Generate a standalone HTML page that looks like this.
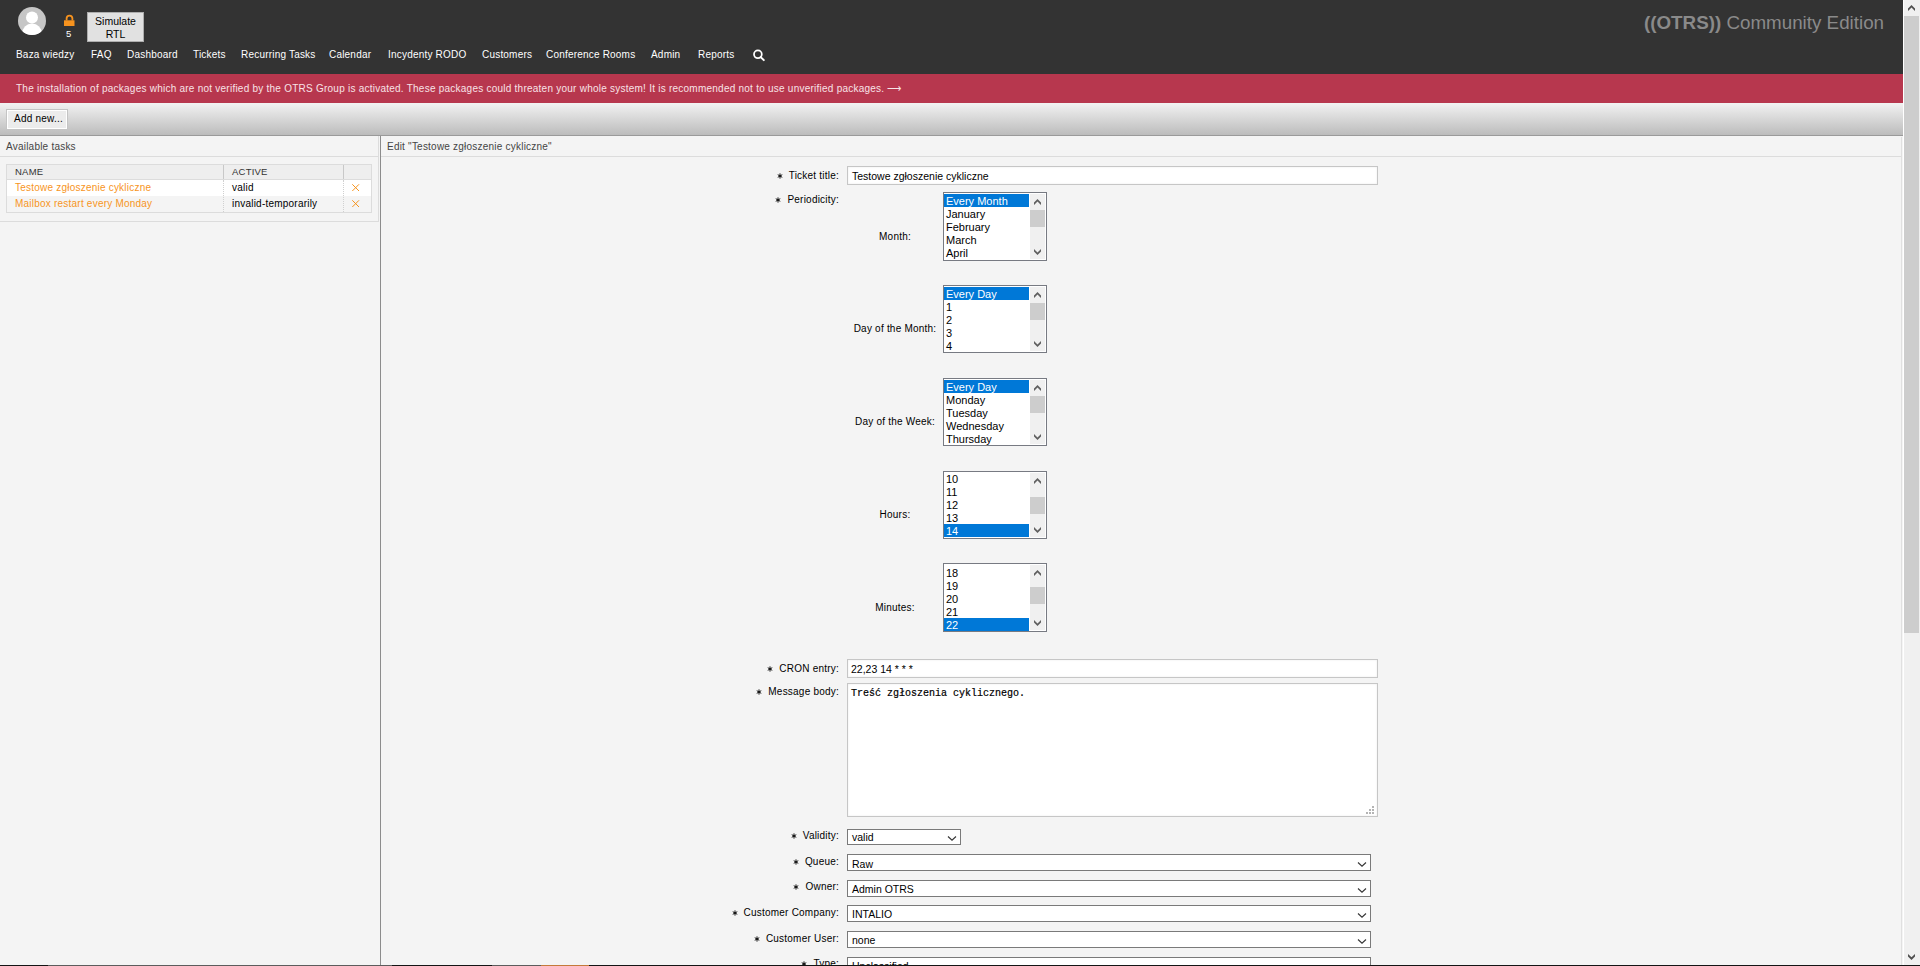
<!DOCTYPE html>
<html><head><meta charset="utf-8">
<style>
html,body{margin:0;padding:0;overflow:hidden;width:1920px;height:966px;background:#f4f4f4;}
body{font-family:"Liberation Sans",sans-serif;font-size:10px;letter-spacing:0.22px;color:#000;position:relative;}
.a{position:absolute;white-space:nowrap;line-height:normal;}
#hdr{position:absolute;left:0;top:0;width:1903px;height:74px;background:#333;}
.nav{position:absolute;top:49px;color:#fff;font-size:10px;letter-spacing:0.2px;white-space:nowrap;}
#banner{position:absolute;left:0;top:74px;width:1903px;height:29px;background:#b7374e;}
#tb{position:absolute;left:0;top:103px;width:1903px;height:32px;background:linear-gradient(#f2f2f2,#bcbcbc);border-bottom:1px solid #9a9a9a;}
.lbl{position:absolute;white-space:nowrap;text-align:right;color:#000;}
.st{display:inline-block;vertical-align:baseline;margin-right:6px;position:relative;top:0px;}
.inp{position:absolute;box-sizing:border-box;background:#fff;border:1px solid #c6c6c6;box-shadow:inset 0 0 2px rgba(0,0,0,0.09);}
.sel{position:absolute;box-sizing:border-box;background:#fff;border:1px solid #7a7a7a;}
.v{letter-spacing:0;font-size:10.5px;}
.lb{position:absolute;box-sizing:border-box;width:104px;height:69px;background:#fff;border:1px solid #777a82;overflow:hidden;}
.lb .it{position:absolute;left:0;width:85px;height:13px;font-size:11px;letter-spacing:0;}
.lb .it span{position:absolute;left:2px;top:1px;}
.lb .it.s{background:#0078d7;color:#fff;}
.lb .sb{position:absolute;left:86px;top:1px;width:15px;height:65px;background:#f0f0f0;}
.lb .th{position:absolute;left:0;width:15px;height:17px;background:#cdcdcd;}
</style></head><body>

<!-- HEADER -->
<div id="hdr">
  <svg style="position:absolute;left:18px;top:7px" width="28" height="28" viewBox="0 0 28 28">
    <defs><clipPath id="avc"><circle cx="14" cy="14" r="14"/></clipPath></defs>
    <circle cx="14" cy="14" r="14" fill="#c6c6c6"/>
    <g clip-path="url(#avc)" fill="#fff">
      <circle cx="14" cy="10.5" r="6"/>
      <ellipse cx="14" cy="27" rx="10" ry="10.5"/>
    </g>
  </svg>
  <svg style="position:absolute;left:64px;top:14px" width="11" height="13" viewBox="0 0 11 13">
    <path d="M2.6 6.5 V4.5 A2.9 2.9 0 0 1 8.4 4.5 V6.5" fill="none" stroke="#f7931e" stroke-width="1.8"/>
    <rect x="0" y="6.3" width="10.5" height="5.7" fill="#f7931e"/>
  </svg>
  <div class="a" style="left:66px;top:28px;color:#fff;font-size:9.5px;">5</div>
  <div style="position:absolute;left:87px;top:12px;width:57px;height:30px;box-sizing:border-box;background:#e1e1e1;border:1px solid #adadad;"></div>
  <div class="a" style="left:87px;width:57px;text-align:center;top:15px;font-size:10.5px;letter-spacing:0;color:#000;">Simulate</div>
  <div class="a" style="left:87px;width:57px;text-align:center;top:28px;font-size:10.5px;letter-spacing:0;color:#000;">RTL</div>

  <div class="nav" style="left:16px">Baza wiedzy</div>
  <div class="nav" style="left:91px">FAQ</div>
  <div class="nav" style="left:127px">Dashboard</div>
  <div class="nav" style="left:193px">Tickets</div>
  <div class="nav" style="left:241px">Recurring Tasks</div>
  <div class="nav" style="left:329px">Calendar</div>
  <div class="nav" style="left:388px">Incydenty RODO</div>
  <div class="nav" style="left:482px">Customers</div>
  <div class="nav" style="left:546px">Conference Rooms</div>
  <div class="nav" style="left:651px">Admin</div>
  <div class="nav" style="left:698px">Reports</div>
  <svg style="position:absolute;left:752px;top:48px" width="14" height="14" viewBox="0 0 14 14">
    <circle cx="5.9" cy="6.3" r="3.9" fill="none" stroke="#fff" stroke-width="1.75"/>
    <path d="M8.7 9.1 L11.8 12.1" stroke="#fff" stroke-width="2" stroke-linecap="round"/>
  </svg>

  <div class="a" style="left:1644px;top:12px;font-size:18.8px;letter-spacing:0;color:#8a8a8a;"><b>((OTRS))</b> Community Edition</div>
</div>

<!-- BANNER -->
<div id="banner">
  <div class="a" style="left:16px;top:9px;color:#f7e3e7;font-size:10px;letter-spacing:0.24px;">The installation of packages which are not verified by the OTRS Group is activated. These packages could threaten your whole system! It is recommended not to use unverified packages. &#10230;</div>
</div>

<!-- TOOLBAR -->
<div id="tb">
  <div style="position:absolute;left:6px;top:6px;width:62px;height:21px;box-sizing:border-box;background:#ececec;border:1px solid #c4c4c4;box-shadow:inset 0 0 0 1px #fff;"></div>
  <div class="a" style="left:14px;top:10px;font-size:10px;color:#000;">Add new...</div>
</div>

<!-- LEFT WIDGET -->
<div style="position:absolute;left:0;top:136px;width:379px;height:86px;box-sizing:border-box;border-right:1px solid #dcdcdc;border-bottom:1px solid #dcdcdc;"></div>
<div style="position:absolute;left:0;top:156px;width:378px;height:1px;background:#dcdcdc;"></div>
<div class="a" style="left:6px;top:141px;color:#444;">Available tasks</div>

<div style="position:absolute;left:6px;top:164px;width:366px;height:49px;box-sizing:border-box;border:1px solid #dcdcdc;background:#fff;"></div>
<div style="position:absolute;left:7px;top:165px;width:364px;height:14px;background:#eeeeee;border-bottom:1px solid #dcdcdc;"></div>
<div style="position:absolute;left:7px;top:196px;width:364px;height:16px;background:#f4f4f4;"></div>
<div style="position:absolute;left:223px;top:165px;width:1px;height:14px;background:#c8c8c8;"></div>
<div style="position:absolute;left:343px;top:165px;width:1px;height:14px;background:#c8c8c8;"></div>
<div style="position:absolute;left:223px;top:180px;width:0;height:32px;border-left:1px dotted #d0d0d0;"></div>
<div style="position:absolute;left:343px;top:180px;width:0;height:32px;border-left:1px dotted #d0d0d0;"></div>
<div class="a" style="left:15px;top:166px;font-size:9.5px;color:#333;">NAME</div>
<div class="a" style="left:232px;top:166px;font-size:9.5px;color:#333;">ACTIVE</div>
<div class="a" style="left:15px;top:182px;color:#f7941d;">Testowe zgłoszenie cykliczne</div>
<div class="a" style="left:232px;top:182px;color:#000;">valid</div>
<svg style="position:absolute;left:351px;top:183px" width="9" height="9" viewBox="0 0 9 9"><path d="M1.3 1.3L8 8M8 1.3L1.3 8" stroke="#f7941d" stroke-width="1.0"/></svg>
<div class="a" style="left:15px;top:198px;color:#f7941d;">Mailbox restart every Monday</div>
<div class="a" style="left:232px;top:198px;color:#000;">invalid-temporarily</div>
<svg style="position:absolute;left:351px;top:199px" width="9" height="9" viewBox="0 0 9 9"><path d="M1.3 1.3L8 8M8 1.3L1.3 8" stroke="#f7941d" stroke-width="1.0"/></svg>

<!-- DIVIDER -->
<div style="position:absolute;left:380px;top:136px;width:1px;height:830px;background:#8c8c8c;"></div>

<!-- RIGHT WIDGET -->
<div style="position:absolute;left:1901px;top:137px;width:1px;height:829px;background:#e0e0e0;"></div>
<div style="position:absolute;left:381px;top:156px;width:1520px;height:1px;background:#dcdcdc;"></div>
<div class="a" style="left:387px;top:141px;color:#444;">Edit "Testowe zgłoszenie cykliczne"</div>

<!-- FORM -->
<div id="form">
<div class="lbl" style="right:1081px;top:170px;"><svg class="st" width="6" height="6" viewBox="0 0 6 6"><path d="M3 0.4V5.6M0.75 1.7L5.25 4.3M0.75 4.3L5.25 1.7" stroke="#000" stroke-width="0.95"/></svg>Ticket title:</div>
<div class="inp" style="left:847px;top:166px;width:531px;height:19px;"></div>
<div class="a v" style="left:852px;top:170px;">Testowe zgłoszenie cykliczne</div>
<div class="lbl" style="right:1081px;top:194px;"><svg class="st" width="6" height="6" viewBox="0 0 6 6"><path d="M3 0.4V5.6M0.75 1.7L5.25 4.3M0.75 4.3L5.25 1.7" stroke="#000" stroke-width="0.95"/></svg>Periodicity:</div>
<div class="a" style="left:835px;width:120px;text-align:center;top:231px;">Month:</div>
<div class="lb" style="left:943px;top:192px;height:69px;"><div class="it s" style="top:1px;"><span>Every Month</span></div><div class="it" style="top:14px;"><span>January</span></div><div class="it" style="top:27px;"><span>February</span></div><div class="it" style="top:40px;"><span>March</span></div><div class="it" style="top:53px;"><span>April</span></div><div class="sb" style="height:65px;"><div class="th" style="top:16px;"></div></div><svg style="position:absolute;left:86px;top:0" width="16" height="16" viewBox="0 0 16 16"><path d="M4 9.4L7.5 5.9L11 9.4V12L7.5 8.5L4 12Z" fill="#606060"/></svg><svg style="position:absolute;left:86px;top:51px" width="16" height="16" viewBox="0 0 16 16"><path d="M4 7.5L7.5 11L11 7.5V4.9L7.5 8.4L4 4.9Z" fill="#606060"/></svg></div>
<div class="a" style="left:835px;width:120px;text-align:center;top:323px;">Day of the Month:</div>
<div class="lb" style="left:943px;top:285px;height:68px;"><div class="it s" style="top:1px;"><span>Every Day</span></div><div class="it" style="top:14px;"><span>1</span></div><div class="it" style="top:27px;"><span>2</span></div><div class="it" style="top:40px;"><span>3</span></div><div class="it" style="top:53px;"><span>4</span></div><div class="sb" style="height:64px;"><div class="th" style="top:16px;"></div></div><svg style="position:absolute;left:86px;top:0" width="16" height="16" viewBox="0 0 16 16"><path d="M4 9.4L7.5 5.9L11 9.4V12L7.5 8.5L4 12Z" fill="#606060"/></svg><svg style="position:absolute;left:86px;top:50px" width="16" height="16" viewBox="0 0 16 16"><path d="M4 7.5L7.5 11L11 7.5V4.9L7.5 8.4L4 4.9Z" fill="#606060"/></svg></div>
<div class="a" style="left:835px;width:120px;text-align:center;top:416px;">Day of the Week:</div>
<div class="lb" style="left:943px;top:378px;height:68px;"><div class="it s" style="top:1px;"><span>Every Day</span></div><div class="it" style="top:14px;"><span>Monday</span></div><div class="it" style="top:27px;"><span>Tuesday</span></div><div class="it" style="top:40px;"><span>Wednesday</span></div><div class="it" style="top:53px;"><span>Thursday</span></div><div class="sb" style="height:64px;"><div class="th" style="top:16px;"></div></div><svg style="position:absolute;left:86px;top:0" width="16" height="16" viewBox="0 0 16 16"><path d="M4 9.4L7.5 5.9L11 9.4V12L7.5 8.5L4 12Z" fill="#606060"/></svg><svg style="position:absolute;left:86px;top:50px" width="16" height="16" viewBox="0 0 16 16"><path d="M4 7.5L7.5 11L11 7.5V4.9L7.5 8.4L4 4.9Z" fill="#606060"/></svg></div>
<div class="a" style="left:835px;width:120px;text-align:center;top:509px;">Hours:</div>
<div class="lb" style="left:943px;top:471px;height:68px;"><div class="it" style="top:0px;"><span>10</span></div><div class="it" style="top:13px;"><span>11</span></div><div class="it" style="top:26px;"><span>12</span></div><div class="it" style="top:39px;"><span>13</span></div><div class="it s" style="top:52px;"><span>14</span></div><div class="sb" style="height:64px;"><div class="th" style="top:24px;"></div></div><svg style="position:absolute;left:86px;top:0" width="16" height="16" viewBox="0 0 16 16"><path d="M4 9.4L7.5 5.9L11 9.4V12L7.5 8.5L4 12Z" fill="#606060"/></svg><svg style="position:absolute;left:86px;top:50px" width="16" height="16" viewBox="0 0 16 16"><path d="M4 7.5L7.5 11L11 7.5V4.9L7.5 8.4L4 4.9Z" fill="#606060"/></svg></div>
<div class="a" style="left:835px;width:120px;text-align:center;top:602px;">Minutes:</div>
<div class="lb" style="left:943px;top:563px;height:69px;"><div class="it" style="top:2px;"><span>18</span></div><div class="it" style="top:15px;"><span>19</span></div><div class="it" style="top:28px;"><span>20</span></div><div class="it" style="top:41px;"><span>21</span></div><div class="it s" style="top:54px;"><span>22</span></div><div class="sb" style="height:65px;"><div class="th" style="top:22px;"></div></div><svg style="position:absolute;left:86px;top:0" width="16" height="16" viewBox="0 0 16 16"><path d="M4 9.4L7.5 5.9L11 9.4V12L7.5 8.5L4 12Z" fill="#606060"/></svg><svg style="position:absolute;left:86px;top:51px" width="16" height="16" viewBox="0 0 16 16"><path d="M4 7.5L7.5 11L11 7.5V4.9L7.5 8.4L4 4.9Z" fill="#606060"/></svg></div>
<div class="lbl" style="right:1081px;top:663px;"><svg class="st" width="6" height="6" viewBox="0 0 6 6"><path d="M3 0.4V5.6M0.75 1.7L5.25 4.3M0.75 4.3L5.25 1.7" stroke="#000" stroke-width="0.95"/></svg>CRON entry:</div>
<div class="inp" style="left:847px;top:659px;width:531px;height:19px;"></div>
<div class="a v" style="left:851px;top:663px;">22,23 14 * * *</div>
<div class="lbl" style="right:1081px;top:686px;"><svg class="st" width="6" height="6" viewBox="0 0 6 6"><path d="M3 0.4V5.6M0.75 1.7L5.25 4.3M0.75 4.3L5.25 1.7" stroke="#000" stroke-width="0.95"/></svg>Message body:</div>
<div class="inp" style="left:847px;top:683px;width:531px;height:134px;"></div>
<div class="a v" style="left:851px;top:688px;font-family:'Liberation Mono',monospace;font-size:10px;-webkit-text-stroke:0.2px #000;">Treść zgłoszenia cyklicznego.</div>
<div style="position:absolute;left:1372px;top:806px;width:2px;height:2px;background:#b4b4b4;"></div>
<div style="position:absolute;left:1372px;top:809px;width:2px;height:2px;background:#b4b4b4;"></div>
<div style="position:absolute;left:1369px;top:809px;width:2px;height:2px;background:#b4b4b4;"></div>
<div style="position:absolute;left:1372px;top:812px;width:2px;height:2px;background:#b4b4b4;"></div>
<div style="position:absolute;left:1369px;top:812px;width:2px;height:2px;background:#b4b4b4;"></div>
<div style="position:absolute;left:1366px;top:812px;width:2px;height:2px;background:#b4b4b4;"></div>
<div class="lbl" style="right:1081px;top:830px;"><svg class="st" width="6" height="6" viewBox="0 0 6 6"><path d="M3 0.4V5.6M0.75 1.7L5.25 4.3M0.75 4.3L5.25 1.7" stroke="#000" stroke-width="0.95"/></svg>Validity:</div>
<div class="sel" style="left:847px;top:829px;width:114px;height:16px;"></div>
<div class="a v" style="left:852px;top:831px;font-size:10.5px;">valid</div>
<svg style="position:absolute;left:947px;top:835px" width="10" height="7" viewBox="0 0 10 7"><path d="M1 1.5 L5 5.2 L9 1.5" fill="none" stroke="#333" stroke-width="1.1"/></svg>
<div class="lbl" style="right:1081px;top:856px;"><svg class="st" width="6" height="6" viewBox="0 0 6 6"><path d="M3 0.4V5.6M0.75 1.7L5.25 4.3M0.75 4.3L5.25 1.7" stroke="#000" stroke-width="0.95"/></svg>Queue:</div>
<div class="sel" style="left:847px;top:854px;width:524px;height:17px;"></div>
<div class="a v" style="left:852px;top:858px;font-size:10.5px;">Raw</div>
<svg style="position:absolute;left:1357px;top:861px" width="10" height="7" viewBox="0 0 10 7"><path d="M1 1.5 L5 5.2 L9 1.5" fill="none" stroke="#333" stroke-width="1.1"/></svg>
<div class="lbl" style="right:1081px;top:881px;"><svg class="st" width="6" height="6" viewBox="0 0 6 6"><path d="M3 0.4V5.6M0.75 1.7L5.25 4.3M0.75 4.3L5.25 1.7" stroke="#000" stroke-width="0.95"/></svg>Owner:</div>
<div class="sel" style="left:847px;top:880px;width:524px;height:17px;"></div>
<div class="a v" style="left:852px;top:883px;font-size:10.5px;">Admin OTRS</div>
<svg style="position:absolute;left:1357px;top:887px" width="10" height="7" viewBox="0 0 10 7"><path d="M1 1.5 L5 5.2 L9 1.5" fill="none" stroke="#333" stroke-width="1.1"/></svg>
<div class="lbl" style="right:1081px;top:907px;"><svg class="st" width="6" height="6" viewBox="0 0 6 6"><path d="M3 0.4V5.6M0.75 1.7L5.25 4.3M0.75 4.3L5.25 1.7" stroke="#000" stroke-width="0.95"/></svg>Customer Company:</div>
<div class="sel" style="left:847px;top:905px;width:524px;height:17px;"></div>
<div class="a v" style="left:852px;top:908px;font-size:10.5px;">INTALIO</div>
<svg style="position:absolute;left:1357px;top:912px" width="10" height="7" viewBox="0 0 10 7"><path d="M1 1.5 L5 5.2 L9 1.5" fill="none" stroke="#333" stroke-width="1.1"/></svg>
<div class="lbl" style="right:1081px;top:933px;"><svg class="st" width="6" height="6" viewBox="0 0 6 6"><path d="M3 0.4V5.6M0.75 1.7L5.25 4.3M0.75 4.3L5.25 1.7" stroke="#000" stroke-width="0.95"/></svg>Customer User:</div>
<div class="sel" style="left:847px;top:931px;width:524px;height:17px;"></div>
<div class="a v" style="left:852px;top:934px;font-size:10.5px;">none</div>
<svg style="position:absolute;left:1357px;top:938px" width="10" height="7" viewBox="0 0 10 7"><path d="M1 1.5 L5 5.2 L9 1.5" fill="none" stroke="#333" stroke-width="1.1"/></svg>
<div class="lbl" style="right:1081px;top:958px;"><svg class="st" width="6" height="6" viewBox="0 0 6 6"><path d="M3 0.4V5.6M0.75 1.7L5.25 4.3M0.75 4.3L5.25 1.7" stroke="#000" stroke-width="0.95"/></svg>Type:</div>
<div class="sel" style="left:847px;top:957px;width:524px;height:17px;"></div>
<div class="a v" style="left:852px;top:960px;font-size:10.5px;">Unclassified</div>
<svg style="position:absolute;left:1357px;top:964px" width="10" height="7" viewBox="0 0 10 7"><path d="M1 1.5 L5 5.2 L9 1.5" fill="none" stroke="#333" stroke-width="1.1"/></svg>
</div>

<!-- PAGE SCROLLBAR -->
<div style="position:absolute;left:1903px;top:0;width:1px;height:966px;background:#fff;"></div>
<div style="position:absolute;left:1904px;top:0;width:16px;height:966px;background:#f0f0f0;"></div>
<div style="position:absolute;left:1904px;top:16px;width:15px;height:617px;background:#cdcdcd;"></div>
<svg style="position:absolute;left:1904px;top:0" width="16" height="16" viewBox="0 0 16 16"><path d="M4 8.5L7.5 5L11 8.5V11.1L7.5 7.6L4 11.1Z" fill="#505050"/></svg>
<svg style="position:absolute;left:1904px;top:950px" width="16" height="16" viewBox="0 0 16 16"><path d="M4 6.5L7.5 9.9L11 6.5V3.9L7.5 7.3L4 3.9Z" fill="#505050"/></svg>

<!-- TASKBAR SLIVER -->
<div style="position:absolute;left:0;top:965px;width:1920px;height:1px;background:#141414;"></div>
<div style="position:absolute;left:48px;top:965px;width:344px;height:1px;background:#5c5c5c;"></div>
<div style="position:absolute;left:492px;top:965px;width:49px;height:1px;background:#5c5c5c;"></div>
<div style="position:absolute;left:541px;top:965px;width:48px;height:1px;background:#c47a3a;"></div>
</body></html>
